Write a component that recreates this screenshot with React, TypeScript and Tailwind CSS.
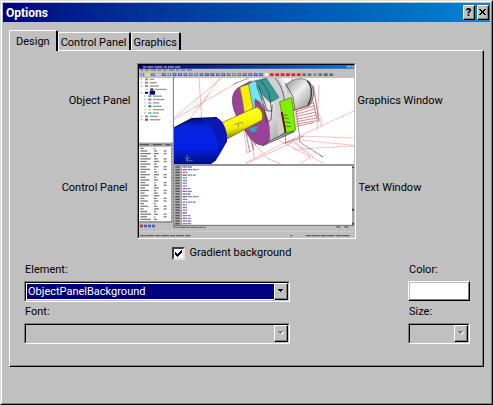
import { useState } from "react";
import type { ReactNode } from "react";

const sunken =
  "border border-t-[#808080] border-l-[#808080] border-b-white border-r-white";
const sunkenInner =
  "border border-t-black border-l-black border-b-[#c0c0c0] border-r-[#c0c0c0]";
const raised =
  "border border-t-white border-l-white border-b-black border-r-black";
const raisedInner =
  "border border-t-[#c0c0c0] border-l-[#c0c0c0] border-b-[#808080] border-r-[#808080]";

function CaptionButton({ label, children }: { label: string; children: ReactNode }) {
  return (
    <button type="button" aria-label={label} className={`h-[15px] w-3 bg-[#c0c0c0] ${raised}`}>
      <span className="flex h-full w-full items-center justify-center border-r border-b border-[#808080]">
        {children}
      </span>
    </button>
  );
}

function Tab({ label, active, onSelect }: { label: string; active: boolean; onSelect: () => void }) {
  return (
    <button
      type="button"
      role="tab"
      aria-selected={active}
      onClick={onSelect}
      className={`rounded-t-[2px] border-t border-r-2 border-l border-t-white border-r-black border-l-white bg-[#c0c0c0] pt-0.5 ${
        active ? "relative -mb-px h-[21px] px-1.5" : "h-[18px] px-0.5"
      }`}
    >
      {label}
    </button>
  );
}

function Combo({ id, label, options, disabled }: { id: string; label: string; options: string[]; disabled?: boolean }) {
  return (
    <div>
      <label htmlFor={id} className="flex h-[18px] items-start pl-px leading-[14px]">
        {label}
      </label>
      <div className={sunken}>
        <div className={`relative h-[19px] ${sunkenInner} ${disabled ? "bg-[#c0c0c0]" : "bg-white p-px"}`}>
          <select
            id={id}
            disabled={disabled}
            className={`block h-full w-full appearance-none pr-4 pl-px outline-none ${
              disabled ? "bg-[#c0c0c0]" : "bg-[#000080] text-white"
            }`}
          >
            {options.map((o) => (
              <option key={o}>{o}</option>
            ))}
          </select>
          <span className={`pointer-events-none absolute inset-y-0 right-0 w-[14px] bg-[#c0c0c0] ${raised}`}>
            <span className="flex h-full w-full items-center justify-center border-r border-b border-[#808080]">
              <svg width="6" height="4" viewBox="0 0 6 4" shapeRendering="crispEdges">
                {disabled && <path d="M1 1h5v1h-1v1h-1v1h-1v-1h-1v-1h-1z" fill="#fff" />}
                <path d="M0 0h5v1h-1v1h-1v1h-1v-1h-1v-1h-1z" fill={disabled ? "#808080" : "#000"} />
              </svg>
            </span>
          </span>
        </div>
      </div>
    </div>
  );
}

const toolbarColors = [
  "#6c86c8", "#e8e060", "#5060a0", "#c0c0c0", "#404880", "#7078a0", "#3040b0", "#3040b0",
  "#4050a0", "#5060b0", "#6070a0", "#4050b0", "#303890", "#404090", "#5050a0", "#405090",
  "#606060", "#808040", "#606880", "#505050", "#4050a0", "#3040c0", "#3040c0", "#ffffff",
  "#e02020", "#e02020", "#e02020", "#e02020", "#e02020", "#e02020", "#707070", "#707070",
  "#909090", "#707070", "#606060", "#707050",
];
const treeColors = ["#909090", "#909090", "#909090", "#202020", "#000080", "#40c040", "#e040e0", "#80e020", "#3060e0", "#e0e040", "#40d0e0", "#909090", "#a04040"];
const treeIndents = [14, 14, 14, 30, 14, 24, 24, 24, 24, 24, 24, 14, 14];
const codeWidths = [28, 48, 16, 40, 14, 14, 14, 14, 24, 30, 24, 48, 16, 40, 14, 14, 14, 14, 24, 26, 26, 26];

function Preview() {
  return (
    <svg
      role="img"
      aria-label="Application preview"
      className="block h-[172px] w-full"
      viewBox="6 9 645 516"
      preserveAspectRatio="none"
    >
      <defs>
        <linearGradient id="caption">
          <stop offset="0" stopColor="#000080" />
          <stop offset="1" stopColor="#1078c8" />
        </linearGradient>
        <linearGradient id="metal" x1="0" y1="0" x2="1" y2="1">
          <stop offset="0" stopColor="#888" />
          <stop offset=".45" stopColor="#eee" />
          <stop offset=".8" stopColor="#aaa" />
          <stop offset="1" stopColor="#444" />
        </linearGradient>
        <linearGradient id="shaft" x1="0" y1="0" x2=".35" y2="1">
          <stop offset="0" stopColor="#969600" />
          <stop offset=".35" stopColor="#ffff20" />
          <stop offset=".7" stopColor="#f4ee00" />
          <stop offset="1" stopColor="#706c00" />
        </linearGradient>
        <linearGradient id="body" x1="0" y1="0" x2="0" y2="1">
          <stop offset="0" stopColor="#000c68" />
          <stop offset=".18" stopColor="#0424d8" />
          <stop offset=".65" stopColor="#0420e8" />
          <stop offset="1" stopColor="#000e80" />
        </linearGradient>
        <clipPath id="viewport">
          <path d="M111 48H651V306H111z" />
        </clipPath>
      </defs>
      <path d="M6 9H651V525H6z" fill="#c0c0c0" />
      <path d="M6 9H651V20H6z" fill="url(#caption)" />
      <path d="M18 15H130" stroke="#8898d0" strokeWidth="4" strokeDasharray="10 3 18 3 24 4" />
      <path d="M630 14H649" stroke="#c0c0c0" strokeWidth="5" strokeDasharray="5 2" />
      <path d="M9 24H165" stroke="#808080" strokeWidth="4" strokeDasharray="10 5 12 6 16 5" />
      {toolbarColors.map((c, i) => (
        <g key={i}>
          <path d={`M${10 + i * 16.2} 38h11`} stroke={c} strokeWidth="8" />
          {i < 23 && <path d={`M${13 + i * 16.2} 38h5`} stroke="#c8d0f0" strokeWidth="3" />}
        </g>
      ))}
      <path d="M250 52H312" stroke="#909090" strokeWidth="4" />

      <path d="M6 48H107V242H6z" fill="#fff" />
      {treeColors.map((c, i) => (
        <g key={i}>
          <path d={`M${treeIndents[i] - 2} ${52 + i * 10.1}h4`} stroke="#aaa" strokeWidth="4" />
          <path d={`M${treeIndents[i] + 10} ${52 + i * 10.1}h9`} stroke={c} strokeWidth="6" />
          {i !== 4 && (
            <path d={`M${treeIndents[i] + 24} ${52 + i * 10.1}h${14 + ((i * 7) % 22)}`} stroke="#999" strokeWidth="4" />
          )}
        </g>
      ))}
      <path d="M38 86H54V98H38z" fill="#000080" />

      <path d="M6 242H107V254H6z" fill="#a0a0a0" />
      <path d="M10 248H100" stroke="#555" strokeWidth="4" strokeDasharray="26 12" />
      <path d="M6 254H104V478H6z" fill="#fff" />
      {Array.from({ length: 28 }, (_, i) => (
        <g key={i} stroke="#808080" strokeWidth="4">
          <path d={`M10 ${259 + i * 7.9}h${10 + ((i * 11) % 23)}`} />
          <path d={`M51 ${259 + i * 7.9}h${4 + ((i * 5) % 13)}`} />
          {i % 3 !== 0 && <path d={`M80 ${259 + i * 7.9}h9`} />}
        </g>
      ))}
      <path d="M48 254V478M78 254V478" stroke="#ddd" strokeWidth="1" />
      <path d="M104 242V478" stroke="#888" strokeWidth="4" strokeDasharray="6 2" />
      <path d="M6 480H107" stroke="#707070" strokeWidth="3" />
      <path d="M9 492H54" stroke="#5058c0" strokeWidth="8" strokeDasharray="9 3" />
      <path d="M9 492H18" stroke="#b04040" strokeWidth="7" />
      <path d="M110 45V498" stroke="#808080" strokeWidth="3" />

      <g clipPath="url(#viewport)" fill="none">
        <path d="M111 48H651V306H111z" fill="#fff" />
        <g stroke="#ff9494" strokeWidth="2">
          <path d="M111 168L254 48M111 172L300 62M186 48L194 168M184 138L248 48M160 168L215 100" />
          <path d="M651 147L440 243L328 302M651 250L470 232L440 243L560 304M490 222L651 228M470 262L651 252" strokeDasharray="14 2" />
          <path d="M318 190L330 274L350 262L345 200M340 200L352 290M330 220L392 290L430 306M336 256L400 212M328 304L470 240L520 284L490 304" />
          <path d="M396 216L440 244M440 244L470 236L530 285M546 68L540 206M538 150L552 166V196M528 72L548 176" />
        </g>
        <g stroke="#666" strokeWidth="2">
          <path d="M290 66L336 48M322 186L338 270M330 194L350 264M342 198L356 250" />
          <path d="M466 48L488 226V240L558 285L548 280M440 75L446 244L500 222M529 70L546 180M520 80L540 172" />
        </g>

        <path d="M442 74C465 48 500 42 519 62C535 82 532 110 516 132L468 146L440 108z" fill="url(#metal)" stroke="#444" strokeWidth="2" />
        <path d="M510 56C528 72 526 108 512 130" stroke="#333" strokeWidth="4" />
        <path d="M340 58L430 36C448 66 472 156 470 210L376 253L330 180z" fill="url(#metal)" />
        <path d="M340 48H424L440 75L452 200L424 222C418 150 410 94 384 48z" fill="#d0d0d0" />
        <path d="M306 76L340 58L398 220L392 240C368 266 336 230 318 194C278 140 278 92 306 76z" fill="#9a4299" stroke="#65315f" strokeWidth="2" />
        <path d="M308 76L335 66L350 146L322 156C318 124 314 100 308 76z" fill="#f8f000" stroke="#666" strokeWidth="2" />
        <path d="M335 65L364 55L376 110L350 146z" fill="#70e8ec" stroke="#559" strokeWidth="1" />
        <path d="M356 58L388 49L426 106L400 122L372 92z" fill="#389898" stroke="#286868" strokeWidth="2" />
        <path d="M352 112C374 118 392 154 398 196V236L376 252L344 204L356 184z" fill="#9a4299" />
        <path d="M336 198C340 216 360 216 362 192" fill="#38a0b8" />
        <g stroke="#333" strokeWidth="2">
          <path d="M358 70L386 145L404 148L396 92L372 55M364 70L392 148M354 110L380 132L388 181L402 174L406 128" />
          <path d="M376 252L474 208M380 246L444 214M414 48C438 76 446 108 446 170" />
          <path d="M444 62L468 104L474 145" />
        </g>
        <path d="M428 120L464 106L476 204L444 214z" fill="#80f000" stroke="#487800" strokeWidth="2" />
        <path d="M434 150L446 212" stroke="#700000" strokeWidth="5" />
        <g stroke="#d84848" strokeWidth="2">
          <path d="M436 158L452 160M440 168L456 170M440 180L460 182M442 192L462 194" stroke="#365800" />
          <path d="M474 144L530 122M474 151L534 130M474 158L536 140M474 165L536 150M476 172L538 160M476 179L540 168M476 186L542 176M478 193L530 182" />
        </g>
        <path d="M246 186L360 134C374 138 382 158 376 174L270 231z" fill="url(#shaft)" stroke="#666000" strokeWidth="2" />
        <path d="M360 134C372 138 382 158 376 174" stroke="#807800" strokeWidth="4" />
        <path d="M292 188L314 180L318 188M304 184V196" stroke="#887850" strokeWidth="2" />
        <path d="M111 198L164 170L240 167C260 178 272 208 270 238L236 296L222 306H111z" fill="url(#body)" />
        <path d="M188 170L240 167C260 178 272 208 270 238L236 296C262 260 226 178 188 170z" fill="#0a18b8" />
        <path d="M111 198L164 170L240 167" stroke="#000858" strokeWidth="4" />
        <path d="M144 286L156 298L168 294M150 278L152 300M146 296L160 286" stroke="#508080" strokeWidth="3" />
      </g>

      <path d="M108 306H651V312H108z" fill="#a0a0a0" />
      <path d="M111 309H651" stroke="#707070" strokeWidth="2" strokeDasharray="4 2" />
      <path d="M135 312H645V489H135z" fill="#fff" />
      <path d="M112 312H135V489H112z" fill="#b0b0b0" />
      {codeWidths.map((w, i) => (
        <g key={i} strokeWidth="4">
          <path d={`M115 ${315 + i * 8.1}h13`} stroke="#505050" />
          <path d={`M137 ${315 + i * 8.1}h${w}`} stroke="#7078b8" strokeDasharray="7 1 5 2" />
          {(i % 8 === 1 || i % 8 === 3) && <path d={`M137 ${315 + i * 8.1}h9`} stroke="#f05050" />}
        </g>
      ))}
      <path d="M648 312V489" stroke="#a8a8a8" strokeWidth="6" />
      <path d="M648 314V318M648 440V446M648 482V488" stroke="#444" strokeWidth="6" />
      <path d="M108 490H651" stroke="#707070" strokeWidth="3" />
      <path d="M112 496H206M598 495H612M622 495H634" stroke="#707070" strokeWidth="4" strokeDasharray="12 2 20 2" />
      <path d="M6 508H651" stroke="#dcdcdc" strokeWidth="2" strokeDasharray="8 4" />
      <path d="M9 521H162M460 521H466M506 521H640" stroke="#606060" strokeWidth="4" strokeDasharray="16 2 24 3" />
    </svg>
  );
}

export default function App() {
  const [tab, setTab] = useState("Design");
  const [gradient, setGradient] = useState(true);
  return (
    <div className="flex min-h-screen flex-col border border-t-[#dfdfdf] border-r-black border-b-black border-l-[#dfdfdf] bg-[#c0c0c0] font-[Roboto,'Liberation_Sans',sans-serif] text-[11px] text-black">
      <div className="flex grow flex-col border border-t-white border-r-[#808080] border-b-[#808080] border-l-white p-px">
        <header className="flex h-[19px] items-center justify-between bg-linear-to-r from-[#000080] to-[#1084d0] pr-px pl-[3px]">
          <h1 className="text-xs font-bold text-white">Options</h1>
          <div className="flex gap-0.5">
            <CaptionButton label="Help">
              <span className="text-[11px] leading-none font-black">?</span>
            </CaptionButton>
            <CaptionButton label="Close">
              <svg width="7" height="6" viewBox="0 0 7 6" shapeRendering="crispEdges">
                <path d="M0 0h2v1h1v1h1v-1h1v-1h2v1h-1v1h-1v2h1v1h1v1h-2v-1h-1v-1h-1v1h-1v1h-2v-1h1v-1h1v-2h-1v-1h-1z" />
              </svg>
            </CaptionButton>
          </div>
        </header>

        <main className="px-1.5 pt-2">
          <div role="tablist" className="flex items-end">
            {["Design", "Control Panel", "Graphics"].map((t) => (
              <Tab key={t} label={t} active={t === tab} onSelect={() => setTab(t)} />
            ))}
          </div>
          <section className={raised}>
            <div className="border-r border-b border-[#808080] pt-3 pb-[21px]">
              <div className="grid grid-cols-[1fr_219px_1fr] gap-y-1.5">
                <div className="flex flex-col items-end pt-[30px] pr-1.5 leading-4">
                  <span>Object Panel</span>
                  <span className="mt-[71px] pr-[3px]">Control Panel</span>
                </div>
                <div className={sunken}>
                  <div className={sunkenInner}>
                    <Preview />
                  </div>
                </div>
                <div className="flex flex-col pt-[30px] pl-0.5 leading-4">
                  <span>Graphics Window</span>
                  <span className="mt-[71px] pl-px">Text Window</span>
                </div>
                <label className="col-start-2 flex items-center gap-[5px] pl-[35px] leading-4">
                  <span className="relative flex">
                    <input
                      type="checkbox"
                      checked={gradient}
                      onChange={(e) => setGradient(e.target.checked)}
                      className="h-[13px] w-[13px] appearance-none border-2 border-t-[#404040] border-r-[#dfdfdf] border-b-[#dfdfdf] border-l-[#404040] bg-white"
                    />
                    {gradient && (
                      <svg className="pointer-events-none absolute top-[3px] left-[3px]" width="7" height="7" viewBox="0 0 7 7" shapeRendering="crispEdges">
                        <path d="M0 2h1v1h1v1h1v-1h1v-1h1v-1h1v-1h1v3h-1v1h-1v1h-1v1h-1v1h-1v-1h-1v-1h-1z" />
                      </svg>
                    )}
                  </span>
                  Gradient background
                </label>
              </div>

              <div className="mt-0.5 grid grid-cols-[266px_62px] justify-between gap-y-[3px] pr-3 pl-3.5">
                <Combo id="element" label="Element:" options={["ObjectPanelBackground"]} />
                <div>
                  <label htmlFor="color" className="flex h-[18px] items-start pl-px leading-[14px]">
                    Color:
                  </label>
                  <button id="color" type="button" className={`block h-5 w-full ${raised}`}>
                    <span className={`block h-full bg-white ${raisedInner}`} />
                  </button>
                </div>
                <Combo id="font" label="Font:" options={[]} disabled />
                <Combo id="size" label="Size:" options={[]} disabled />
              </div>
            </div>
          </section>
        </main>
      </div>
    </div>
  );
}
